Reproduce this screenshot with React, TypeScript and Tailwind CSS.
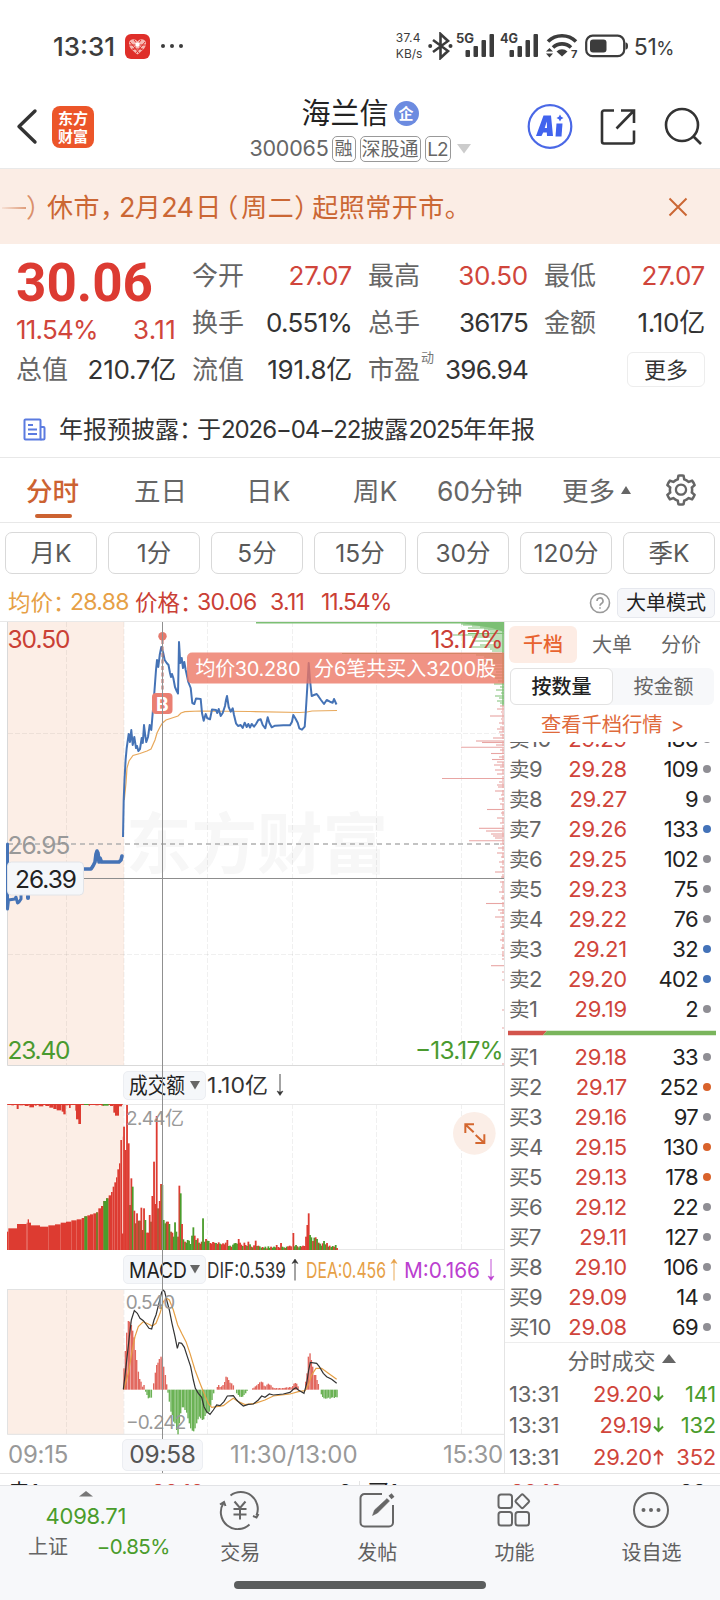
import type { ReactNode } from 'react';
import { AiOutlineSetting } from 'react-icons/ai';

type Tone = 'gray' | 'blue' | 'orange';
type BarColor = 'r' | 'g' | 'b';

interface Level {
  label: string;
  price: string;
  qty: string;
  tone: Tone;
}

const DOT: Record<Tone, string> = {
  gray: 'bg-[#8f8e94]',
  blue: 'bg-[#4372b8]',
  orange: 'bg-[#d9622b]',
};

const ASKS: Level[] = [
  { label: '卖10', price: '29.29', qty: '180', tone: 'gray' },
  { label: '卖9', price: '29.28', qty: '109', tone: 'gray' },
  { label: '卖8', price: '29.27', qty: '9', tone: 'gray' },
  { label: '卖7', price: '29.26', qty: '133', tone: 'blue' },
  { label: '卖6', price: '29.25', qty: '102', tone: 'gray' },
  { label: '卖5', price: '29.23', qty: '75', tone: 'gray' },
  { label: '卖4', price: '29.22', qty: '76', tone: 'gray' },
  { label: '卖3', price: '29.21', qty: '32', tone: 'blue' },
  { label: '卖2', price: '29.20', qty: '402', tone: 'blue' },
  { label: '卖1', price: '29.19', qty: '2', tone: 'gray' },
];

const BIDS: Level[] = [
  { label: '买1', price: '29.18', qty: '33', tone: 'gray' },
  { label: '买2', price: '29.17', qty: '252', tone: 'orange' },
  { label: '买3', price: '29.16', qty: '97', tone: 'gray' },
  { label: '买4', price: '29.15', qty: '130', tone: 'orange' },
  { label: '买5', price: '29.13', qty: '178', tone: 'orange' },
  { label: '买6', price: '29.12', qty: '22', tone: 'gray' },
  { label: '买7', price: '29.11', qty: '127', tone: 'gray' },
  { label: '买8', price: '29.10', qty: '106', tone: 'gray' },
  { label: '买9', price: '29.09', qty: '14', tone: 'gray' },
  { label: '买10', price: '29.08', qty: '69', tone: 'gray' },
];

const TRADES = [
  { time: '13:31', price: '29.20', qty: '141', up: false },
  { time: '13:31', price: '29.19', qty: '132', up: false },
  { time: '13:31', price: '29.20', qty: '352', up: true },
];

const PERIODS = ['月K', '1分', '5分', '15分', '30分', '120分', '季K'];

const GRID_X = [66.5, 124, 207.5, 292.5, 376.5, 461.5];

const PRICE =
  '123,837 123.7,800 124.5,780 125.6,760 126.7,748 128.7,734 130,742 131.3,730 132.7,745 134.3,737 136,748 137,746 138.3,751 140,749 141.7,738 142.8,743 144,725 145.3,736 146.3,742 148,737 149.7,725 151.3,730 152.7,713 154.3,693 156,670 157,660 158.3,667 159.7,655 161.3,647 163,652 164.7,660 166.7,663 168.5,665 170,673 171,677 172,674 173.3,678 175,687 176.7,691 178,693.5 178.5,670 179,642 180.3,663 181.7,658 183,668 184.3,662 185.7,670 188.3,682 190.7,688 192.3,703 194.3,704 196,698.5 200.7,699 202,713 203.7,720.7 205.7,714 207.3,718.3 210,719.3 212,709.5 216,710 217.3,713 218.7,709 220.7,716 222.7,713 225,706 226,700 227,696 228.7,707 230.7,711.7 232.7,708.3 234,715 236,723.3 238,726 240.7,725 242.7,728 244.7,722.7 246.7,727 248.3,724 250,727.5 251.7,724 254,726.7 256,724 258.3,720 260.7,719.3 262.7,725 265.3,728.3 267.7,717.3 269.3,722.7 271.7,727.3 275,725.7 283.3,725.3 290,725.3 292,721.7 293.3,715 295.3,718.3 297.7,722.7 299.3,728.3 302,729.7 304.7,726.7 305.7,713 307.3,687 308.7,663 310,680 311.7,696 314,695 316.7,694 318.7,696.7 321,700 324,704 326.7,700 330,701.7 332.7,702.7 334,699 336.5,704.5';

const AVERAGE =
  '124.3,800 126,783 127,768 129,761 133,755.5 140,753.5 147,751 151,749 155,740 157,733 160,727 162.5,723 166,720 172,718 178,716 181,713 185,711.7 200,711 250,711.5 300,712.5 307,712 312,711 337,710.5';

// opening auction, drawn heavier than the session line
const AUCTION_A = '7.5,844 7.5,909 8.5,900 15,899 16,897 17.5,903 19,902 21,899 21,892';
const AUCTION_B = '82,869 91,869 93,866 95,862 96,854 97,851 98,853 99,862 100,858 101.5,862 119,862 121,860 122,856';

// price distribution, [y, left edge]
const CHIPS_GREEN: [number, number][] = [
  [624, 461], [625, 463], [626, 472], [627, 480], [628, 468], [629, 484], [630, 488], [632, 490], [633.5, 468], [635, 453],
  [637, 472], [639, 490], [641, 473], [643, 494], [645, 480], [647, 470], [649, 490], [651, 492], [653.5, 342], [655, 476],
  [657, 484], [659, 492], [661, 480], [663, 488], [666, 493], [669, 490], [672, 496], [675, 488], [678, 495], [681, 498],
  [684, 494], [687, 500], [690, 496], [693, 501], [696, 495], [698, 499], [701, 497], [703, 500],
];
const CHIPS_RED: [number, number][] = [
  [706, 500], [709, 497], [712, 501], [716, 490], [719, 501], [723, 499], [727, 500], [729, 497], [732, 499], [735, 500],
  [738, 493], [741, 476], [742.5, 482], [745, 496], [747.3, 461], [750, 500], [753.5, 491], [757, 499], [759.5, 492], [762, 497],
  [765, 494], [767, 500], [770, 495], [774, 497], [778.5, 442], [782, 499], [785, 497], [787, 498], [791, 495], [795, 501],
  [799, 499], [804, 500], [809.5, 487], [813, 501], [818, 497], [823, 500], [828.3, 479], [831, 486], [834, 491], [836, 493],
  [838, 495], [840.7, 469], [844, 500], [848, 498], [853, 497], [857, 501], [862, 499], [867, 500], [872, 495], [877, 501],
  [882, 500], [887, 501], [892, 499], [898, 501], [903.5, 486], [910, 498], [913, 500], [917, 495], [921, 501], [927, 500],
  [934, 501], [940, 500], [948, 501], [956, 502], [965.7, 491], [972, 502], [980, 502], [1010, 502], [1028, 502], [1064, 502],
];

const AUCTION_TOP: [number, number][] = [
  [21, 485], [25, 475], [51, 462], [80, 458], [83, 448], [87, 458], [93, 466], [120, 470], [145, 466], [165, 463], [182, 458], [198, 455], [214, 451],
  [230, 448], [245, 444], [253, 439], [262, 436], [270, 433], [280, 430], [288, 427], [295, 415], [303, 408], [310, 393], [318, 385], [326, 376], [333, 366],
  [338, 350], [343, 337], [348, 322], [352, 298], [357, 280], [361, 210], [366, 490],
];

// hanging bars of unmatched auction volume
const UNMATCHED: [number, number, number][] = [
  [22, 8, 104], [34, 8, 106], [50, 6, 117], [58, 12, 106], [74, 12, 108], [88, 14, 112], [104, 6, 107], [116, 14, 109], [136, 12, 108],
  [148, 12, 113], [160, 10, 117], [170, 14, 121], [185, 7, 125], [190, 7, 133], [197, 8, 106], [207, 5, 114], [226, 5, 122], [228, 10, 148],
  [235, 8, 162], [246, 4, 104], [266, 4, 107], [286, 10, 106], [304, 8, 107], [330, 10, 108], [340, 5, 128], [345, 12, 137], [357, 9, 109],
];

const VOLUME: [number, number, BarColor][] = [
  [372, 170, 'r'], [377, 240, 'r'], [381, 105, 'r'], [386, 220, 'r'], [390, 405, 'b'], [394, 325, 'r'], [398, 350, 'g'], [403, 422, 'r'],
  [407, 460, 'b'], [411, 430, 'r'], [416, 452, 'b'], [420, 452, 'b'], [424, 413, 'r'], [428, 480, 'b'], [432, 415, 'r'], [436, 450, 'g'],
  [441, 488, 'r'], [445, 488, 'r'], [449, 435, 'r'], [453, 455, 'b'], [457, 378, 'r'], [462, 275, 'r'], [466, 402, 'r'], [470, 138, 'r'],
  [474, 415, 'b'], [479, 393, 'r'], [483, 342, 'r'], [487, 345, 'g'], [491, 450, 'g'], [496, 460, 'g'], [500, 455, 'b'], [504, 455, 'r'],
  [508, 462, 'g'], [513, 485, 'b'], [517, 488, 'r'], [521, 500, 'g'], [525, 457, 'g'], [529, 485, 'g'], [534, 500, 'b'], [538, 347, 'r'],
  [542, 370, 'g'], [546, 462, 'r'], [550, 508, 'g'], [555, 515, 'r'], [559, 518, 'g'], [563, 510, 'g'], [567, 512, 'g'], [571, 522, 'g'],
  [576, 497, 'g'], [580, 472, 'g'], [584, 497, 'r'], [588, 510, 'g'], [593, 505, 'r'], [597, 518, 'g'], [601, 521, 'r'], [605, 515, 'b'],
  [609, 445, 'g'], [614, 515, 'g'], [618, 507, 'r'], [622, 512, 'g'], [626, 513, 'g'], [631, 519, 'r'], [635, 521, 'r'], [639, 516, 'r'],
  [643, 518, 'r'], [648, 519, 'g'], [652, 522, 'r'], [656, 517, 'r'], [660, 521, 'g'], [665, 523, 'r'], [669, 520, 'r'], [673, 523, 'r'],
  [677, 518, 'r'], [682, 510, 'r'], [686, 528, 'g'], [690, 527, 'g'], [694, 530, 'r'], [699, 524, 'g'], [703, 520, 'g'], [707, 519, 'g'],
  [711, 521, 'g'], [716, 507, 'r'], [720, 518, 'r'], [724, 524, 'r'], [728, 528, 'g'], [733, 518, 'r'], [737, 525, 'r'], [741, 528, 'g'],
  [745, 515, 'r'], [750, 523, 'g'], [754, 530, 'r'], [758, 532, 'g'], [762, 526, 'r'], [767, 512, 'r'], [771, 528, 'g'], [775, 527, 'r'],
  [779, 529, 'g'], [784, 533, 'g'], [788, 531, 'r'], [792, 534, 'g'], [796, 530, 'g'], [801, 535, 'r'], [805, 529, 'g'], [809, 534, 'g'],
  [813, 530, 'r'], [818, 533, 'g'], [822, 530, 'g'], [826, 532, 'g'], [830, 525, 'r'], [835, 531, 'r'], [839, 533, 'r'], [843, 519, 'r'],
  [847, 530, 'g'], [852, 532, 'g'], [856, 534, 'r'], [860, 530, 'g'], [864, 529, 'r'], [869, 527, 'r'], [873, 529, 'r'], [880, 489, 'r'],
  [884, 529, 'g'], [888, 525, 'g'], [892, 529, 'b'], [897, 532, 'g'], [901, 528, 'g'], [905, 530, 'r'], [909, 527, 'r'], [914, 528, 'r'],
  [918, 500, 'r'], [922, 465, 'r'], [926, 430, 'r'], [930, 495, 'g'], [934, 502, 'g'], [939, 513, 'r'], [943, 503, 'g'], [947, 502, 'r'],
  [951, 507, 'g'], [956, 518, 'b'], [960, 521, 'g'], [964, 527, 'g'], [968, 520, 'r'], [972, 513, 'g'], [977, 523, 'g'], [981, 519, 'r'],
  [985, 530, 'g'], [989, 527, 'r'], [994, 531, 'g'], [998, 528, 'g'], [1002, 530, 'r'], [1007, 525, 'g'], [1011, 534, 'r'],
];

const FILL: Record<BarColor, string> = { r: '#dd3b31', g: '#4a9c2b', b: '#a4562e' };

const MACD: [number, number][] = [
  [372, 325], [376, 273], [380, 218], [385, 183], [389, 185], [394, 195], [398, 212], [402, 232], [406, 270], [410, 300], [415, 335],
  [419, 357], [423, 365], [428, 380], [432, 375], [437, 395], [441, 405], [445, 415], [449, 413], [454, 413], [461, 370], [466, 338],
  [470, 315], [474, 308], [478, 297], [483, 290], [487, 295], [491, 320], [496, 345], [500, 373], [504, 398], [508, 425], [513, 455],
  [517, 465], [521, 485], [525, 490], [530, 510], [534, 523], [538, 490], [542, 460], [547, 442], [551, 442], [555, 450], [560, 458],
  [564, 475], [568, 490], [572, 505], [577, 512], [581, 514], [585, 505], [590, 490], [594, 478], [598, 470], [602, 475], [607, 480],
  [611, 478], [615, 468], [620, 460], [624, 457], [628, 455], [632, 437], [636, 420], [641, 400], [652, 381], [656, 375], [660, 381],
  [665, 379], [669, 375], [674, 366], [678, 350], [682, 352], [686, 360], [690, 368], [695, 370], [700, 376], [710, 400], [715, 405],
  [719, 410], [724, 411], [728, 410], [732, 405], [737, 400], [741, 393], [758, 385], [762, 383], [766, 379], [770, 376], [775, 372],
  [779, 367], [784, 365], [788, 367], [792, 377], [796, 379], [801, 374], [805, 371], [809, 374], [813, 376], [818, 382], [822, 384],
  [826, 385], [830, 384], [835, 385], [839, 384], [843, 385], [848, 384], [852, 384], [856, 383], [860, 382], [865, 383], [869, 381],
  [873, 382], [878, 378], [882, 371], [886, 369], [890, 371], [894, 379], [917, 365], [921, 340], [925, 290], [930, 280], [934, 300],
  [938, 320], [943, 345], [947, 345], [951, 360], [955, 372], [964, 403], [968, 411], [972, 415], [977, 416], [981, 415], [985, 413],
  [990, 416], [994, 413], [998, 412], [1003, 414], [1007, 411], [1011, 412],
];

const DIF =
  '370,388 378,320 388,230 394,180 403,152 412,160 420,175 430,182 440,195 447,205 455,207 462,180 468,165 478,125 485,97 489,90 494,95 500,120 508,150 516,190 525,230 532,265 537,248 545,250 553,262 562,290 572,320 580,360 586,385 595,400 605,412 612,440 620,455 630,463 640,450 650,435 660,437 672,425 682,408 700,407 710,420 720,430 730,438 745,433 760,432 775,420 785,408 795,412 808,402 820,405 850,402 870,397 880,388 888,383 895,390 912,400 920,370 926,330 931,307 950,310 958,320 970,340 980,350 995,358 1010,370';
const DEA =
  '371,388 385,340 395,280 405,230 415,200 430,185 445,192 457,198 468,190 480,160 490,125 500,115 508,120 520,150 533,195 545,220 558,245 570,280 585,330 600,370 612,400 625,430 635,442 650,440 670,437 685,425 700,415 715,425 735,434 765,430 795,420 820,408 870,402 895,395 915,392 925,375 935,345 948,325 965,325 985,340 1010,358';

function Num({ children, tight, className = '' }: { children: ReactNode; tight?: boolean; className?: string }) {
  return <span className={`${tight ? 'tracking-[-0.03em]' : 'tracking-[-0.01em]'} ${className}`}>{children}</span>;
}

function Signal({ label }: { label: string }) {
  return (
    <svg className="overflow-visible" width="40" height="28" viewBox="0 0 40 28">
      <text x="0" y="10.500" fontSize="12.500" fontWeight="700" textLength="18" lengthAdjust="spacingAndGlyphs" fill="#3c3c3c">{label}</text>
      <g fill="#3c3c3c">
        <rect x="9.500" y="18" width="4.500" height="7" rx="1" />
        <rect x="17.500" y="14" width="4.500" height="11" rx="1" />
        <rect x="25.500" y="8" width="4.500" height="17" rx="1" />
        <rect x="33.500" y="2" width="4.500" height="23" rx="1" />
      </g>
    </svg>
  );
}

function StatusBar() {
  return (
    <div className="flex h-[92px] items-center justify-between pl-[53px] pr-[46px] text-[#3c3c3c]">
      <div className="flex items-center">
        <span className="w-[72px] pt-[2px] text-[26px] font-medium leading-none">13:31</span>
        <svg width="25" height="25" viewBox="0 0 25 25">
          <rect width="25" height="25" rx="6" fill="#df2f2a" />
          <path d="M12.500 20.500C6 15.500 3.500 12.500 4 9c.5-4 6-5 8.500-1.500C15 4 20.500 5 21 9c.5 3.500-2 6.500-8.500 11.500z" fill="#f6b9b3" />
          <path d="M5 8l9 11M9 6l8 10M20 8l-9 11M16 6L8 16M4 11h17M7 15h11" stroke="#df2f2a" strokeWidth="1" />
          <rect x="10.500" y="8.500" width="4" height="4" fill="#fff" />
        </svg>
        <div className="ml-[11px] flex gap-[5px]">
          <i className="h-[4px] w-[4px] rounded-full bg-[#3c3c3c]" />
          <i className="h-[4px] w-[4px] rounded-full bg-[#3c3c3c]" />
          <i className="h-[4px] w-[4px] rounded-full bg-[#3c3c3c]" />
        </div>
      </div>
      <div className="flex items-center">
        <div className="flex w-[32px] flex-col text-[12px] leading-[16px]">
          <span className="whitespace-nowrap tracking-[0.02em]">37.4</span>
          <span className="whitespace-nowrap">KB/s</span>
        </div>
        <svg width="26" height="28" viewBox="0 0 26 28" fill="none" stroke="#3c3c3c" strokeWidth="2.600">
          <path d="M5 8l15 11-7.500 7V2l7.500 7L5 20" />
          <circle cx="2.200" cy="14" r="2" fill="#3c3c3c" stroke="none" />
          <circle cx="22.500" cy="14" r="2" fill="#3c3c3c" stroke="none" />
        </svg>
        <div className="ml-[2px] flex gap-[4px]">
          <Signal label="5G" />
          <Signal label="4G" />
        </div>
        <svg className="ml-[5px] overflow-visible" width="34" height="26" viewBox="0 0 34 26" fill="none">
          <path d="M3 8.500a20 20 0 0 1 28 0" stroke="#3c3c3c" strokeWidth="3.600" />
          <path d="M8 14.500a13 13 0 0 1 18 0" stroke="#3c3c3c" strokeWidth="3.600" />
          <path d="M11.500 18.500a8 8 0 0 1 11 0L17 23.500z" fill="#3c3c3c" />
          <path d="M1 18.500l3.500-3.500 3.500 3.500zM1 20.500h7l-3.500 4z" fill="#3c3c3c" />
          <text x="26" y="25" fontSize="11" fontWeight="700" fill="#3c3c3c">7</text>
        </svg>
        <svg className="ml-[6px]" width="44" height="24" viewBox="0 0 44 24">
          <rect x="1.200" y="1.700" width="38" height="20.500" rx="6.500" fill="none" stroke="#3c3c3c" strokeWidth="2.200" />
          <rect x="5" y="5.500" width="16.500" height="13" rx="3" fill="#3c3c3c" />
          <path d="M40.500 8.500c2 0 2.500 1.500 2.500 3.500s-.5 3.500-2.500 3.500z" fill="#3c3c3c" />
        </svg>
        <span className="ml-[5px] pt-[2px] text-[23px] leading-none tracking-[-0.02em]">
          51<span className="text-[18.500px]">%</span>
        </span>
      </div>
    </div>
  );
}

function Header() {
  return (
    <header className="flex h-[77px] items-start border-b border-[#e9e9e9]">
      <div className="flex w-[240px] items-center pl-[16px] pt-[14px]">
        <svg width="22" height="40" viewBox="0 0 22 40" fill="none" stroke="#333" strokeWidth="3.400" strokeLinecap="round" strokeLinejoin="round">
          <path d="M19 4L3 19.500l16 15.500" />
        </svg>
        <div className="ml-[14px] flex h-[42px] w-[42px] flex-col items-center justify-center rounded-[8px] bg-[#ec5529] font-['Noto_Sans_CJK_SC'] text-[15px] font-bold leading-[18px] text-white">
          <span>东方</span>
          <span>财富</span>
        </div>
      </div>
      <div className="flex w-[240px] flex-col items-center pt-[3px]">
        <div className="flex items-center">
          <span className="pt-[2px] text-[29px] leading-[34px] text-[#222]">海兰信</span>
          <span className="ml-[5px] flex h-[25px] w-[25px] items-center justify-center rounded-full bg-[#6c8be0] text-[15px] font-bold leading-none text-white">企</span>
        </div>
        <div className="mt-[5px] flex items-center gap-[4px] text-[20px] leading-none text-[#666]">
          <Num className="-mr-px text-[21.500px]">300065</Num>
          <span className="flex h-[26px] w-[24px] items-center justify-center rounded-[5px] border border-[#999] text-[18px]">融</span>
          <span className="flex h-[26px] w-[61px] items-center justify-center rounded-[5px] border border-[#999] text-[19px]">深股通</span>
          <span className="flex h-[26px] w-[26px] items-center justify-center rounded-[5px] border border-[#999] text-[19px] tracking-[-0.04em]">L2</span>
          <svg className="ml-[2px]" width="14" height="10" viewBox="0 0 14 10">
            <path d="M0 0h14L7 9.500z" fill="#ccc" />
          </svg>
        </div>
      </div>
      <div className="flex flex-1 items-center pl-[47px] pt-[12px]">
        <svg width="46" height="46" viewBox="0 0 46 46">
          <circle cx="23" cy="22.500" r="21.300" fill="none" stroke="#4a68e6" strokeWidth="2.200" />
          <path d="M16.500 11.500h7.500l2 20.500h-6l-.2-3.500h-3.600L14.500 32H9z M19.800 17.500l-2.100 6.500h2.300z" fill="#4163ee" fillRule="evenodd" />
          <path d="M29.500 19.500h6L34.500 32.500h-6z" fill="#4163ee" />
          <path d="M33 10.500l1.200 2.300 2.300 1.200-2.300 1.200-1.200 2.300-1.200-2.300-2.300-1.200 2.300-1.200z" fill="#4163ee" />
        </svg>
        <svg className="ml-[27px]" width="36" height="38" viewBox="0 0 36 38" fill="none" stroke="#333" strokeWidth="2.600">
          <path d="M14 2.500H4a2 2 0 0 0-2 2V33.500a2 2 0 0 0 2 2H32a2 2 0 0 0 2-2V22.500" />
          <path d="M21 2.500H34V15M33.500 3L16.500 20.500" />
        </svg>
        <svg className="ml-[27px]" width="40" height="40" viewBox="0 0 40 40" fill="none" stroke="#333" strokeWidth="2.600">
          <circle cx="19" cy="18" r="16" />
          <path d="M30 29l8 8" />
        </svg>
      </div>
    </header>
  );
}

function Notice() {
  return (
    <div className="flex h-[75px] items-center justify-between bg-[#fbede5] pr-[32px] pt-px text-[26px] leading-none tracking-[0.02em] text-[#cb6734]">
      <div className="flex items-center whitespace-nowrap pt-px">
        <span className="ml-[2px] h-[2px] w-[24px] bg-gradient-to-r from-[#cb6734]/10 to-[#cb6734]/60" />
        <span className="w-[20px] text-[#cb6734]/70 [font-feature-settings:'halt']">）</span>
        <span className="pl-px">休市</span>
        <span className="w-[19px] [font-feature-settings:'halt']">，</span>
        <Num tight className="text-[27px]">2</Num>
        <span>月</span>
        <Num tight className="text-[27px]">24</Num>
        <span className="ml-[2px] w-[27px]">日</span>
        <span className="w-[19px] pl-[3px] [font-feature-settings:'halt']">（</span>
        <span>周二</span>
        <span className="w-[18px] [font-feature-settings:'halt']">）</span>
        <span>起照常开市。</span>
      </div>
      <svg width="20" height="20" viewBox="0 0 20 20" stroke="#cb6734" strokeWidth="2">
        <path d="M1.500 1.500l17 17M18.500 1.500l-17 17" />
      </svg>
    </div>
  );
}

function Pair({ label, value, red, sup, tight }: { label: string; value: string; red?: boolean; sup?: string; tight?: boolean }) {
  return (
    <div className="relative flex items-center justify-between whitespace-nowrap">
      <span className="text-[26px] leading-none text-[#666]">{label}</span>
      {sup && <span className="absolute left-[53px] top-[5px] text-[13px] leading-none text-[#777]">{sup}</span>}
      <Num tight={tight} className={`text-[26px] leading-none ${red ? 'text-[#d0453b]' : 'text-[#333]'}`}>{value}</Num>
    </div>
  );
}

function Quote() {
  return (
    <section className="flex h-[149px] gap-[16px] pl-[16px] pr-[15px] pt-[8px]">
      <div className="flex w-[160px] flex-col">
        <span className="flex h-[62px] items-center pt-px font-[Roboto] text-[53px] font-bold leading-none text-[#dc3b32]">30.06</span>
        <div className="flex h-[34px] items-center justify-between text-[26px] leading-none text-[#d0453b]">
          <Num tight>11.54%</Num>
          <span className="tracking-[0.01em]">3.11</span>
        </div>
        <div className="grid h-[46px]">
          <Pair label="总值" value="210.7亿" />
        </div>
      </div>
      <div className="grid h-[141px] w-[160px] grid-rows-3">
        <Pair label="今开" value="27.07" red />
        <Pair label="换手" value="0.551%" tight />
        <Pair label="流值" value="191.8亿" />
      </div>
      <div className="grid h-[141px] w-[160px] grid-rows-3">
        <Pair label="最高" value="30.50" red />
        <Pair label="总手" value="36175" tight />
        <Pair label="市盈" value="396.94" sup="动" tight />
      </div>
      <div className="grid h-[141px] w-[161px] grid-rows-3">
        <Pair label="最低" value="27.07" red />
        <Pair label="金额" value="1.10亿" />
        <button className="h-[35px] w-[78px] self-center justify-self-end rounded-[6px] border border-[#ededed] text-[22px] leading-none text-[#333]">更多</button>
      </div>
    </section>
  );
}

function News() {
  return (
    <div className="flex h-[65px] items-center border-b border-[#e8e8e8] pl-[23px] pt-[8px]">
      <svg width="23" height="23" viewBox="0 0 23 23" fill="none" stroke="#5b7be0" strokeWidth="2">
        <path d="M17.500 21.500H2.500a1 1 0 0 1-1-1v-18a1 1 0 0 1 1-1H16.500a1 1 0 0 1 1 1z" />
        <path d="M17.500 9h3a1 1 0 0 1 1 1v10.500a1 1 0 0 1-1 1h-3M5 7h5M5 11.500h9M5 16h9" />
      </svg>
      <div className="ml-[13px] flex items-center whitespace-nowrap pt-px text-[24px] leading-none text-[#333]">
        <span>年报预披露</span>
        <span className="w-[18px] [font-feature-settings:'halt']">：</span>
        <span>于</span>
        <span className="tracking-[-0.045em]">2026−04−22</span>
        <span>披露</span>
        <span className="tracking-[-0.045em]">2025</span>
        <span>年年报</span>
      </div>
    </div>
  );
}

function Tabs() {
  return (
    <nav className="flex h-[65px] items-center border-b border-[#e8e8e8] pt-[2px] text-[26.500px] leading-none text-[#666]">
      <div className="relative ml-[26px] w-[108px] font-medium text-[#cc6231]">
        分时
        <i className="absolute left-[9px] top-[36px] h-[4px] w-[37px] rounded-full bg-[#cc6231]" />
      </div>
      <div className="w-[112px]">五日</div>
      <div className="w-[107px]">日K</div>
      <div className="w-[84px]">周K</div>
      <div className="w-[125px]"><Num>60</Num>分钟</div>
      <div className="flex w-[101px] items-center gap-[6px]">
        更多
        <svg className="mb-[2px]" width="10" height="8" viewBox="0 0 10 8"><path d="M5 0l5 8H0z" fill="#666" /></svg>
      </div>
      <AiOutlineSetting className="mb-[2px]" size={36} />
    </nav>
  );
}

function Periods() {
  return (
    <div className="flex h-[61px] items-center gap-[11px] px-[5px] pb-px">
      {PERIODS.map((p) => (
        <button key={p} className="h-[42px] flex-1 rounded-[7px] border border-[#d9d9d9] pt-px text-[24.500px] leading-none text-[#595959]">
          {p}
        </button>
      ))}
    </div>
  );
}

function InfoBar() {
  return (
    <div className="flex h-[38px] items-center border-b border-[#e8e8e8] pl-[8px] pr-[5px] text-[23px] leading-none text-[#ca4035]">
      <span className="w-[62px] pt-px text-[22.500px] text-[#e6a046]">
        均价<span className="[font-feature-settings:'halt']">：</span>
      </span>
      <Num tight className="w-[65px] text-[#e6a046]">28.88</Num>
      <span className="w-[62px] pt-px text-[22.500px]">
        价格<span className="[font-feature-settings:'halt']">：</span>
      </span>
      <Num tight className="w-[73px]">30.06</Num>
      <Num tight className="w-[51px]">3.11</Num>
      <span className="flex-1 tracking-[-0.045em]">11.54%</span>
      <svg width="22" height="22" viewBox="0 0 22 22" fill="none" stroke="#999" strokeWidth="1.600">
        <circle cx="11" cy="11" r="9.500" />
        <path d="M8 9a3 3 0 1 1 4.500 2.500c-1.200.7-1.500 1.200-1.500 2.200M11 15.300v1.500" />
      </svg>
      <button className="ml-[6px] h-[30px] w-[98px] rounded-[5px] border border-[#e6e8ee] bg-[#f6f7fa] text-[20px] leading-none text-[#222]">大单模式</button>
    </div>
  );
}

function PriceChart() {
  return (
    <svg className="block" width="504" height="444" viewBox="0 622 504 444">
      <rect x="7.500" y="622" width="116.500" height="443" fill="#fceee6" />
      <text x="126" y="868" fontSize="66" fontWeight="700" textLength="262" lengthAdjust="spacingAndGlyphs" fill="#f7f7f7">东方财富</text>
      <g stroke="#000" strokeOpacity="0.06" strokeWidth="1" strokeDasharray="5 2">
        {GRID_X.map((x) => <line key={x} x1={x} x2={x} y1="622" y2="1065" />)}
        <line x1="8" x2="504" y1="733.500" y2="733.500" />
        <line x1="8" x2="504" y1="954.500" y2="954.500" />
      </g>
      <path d="M7.500 622V1065.500H504" fill="none" stroke="#d9d9d9" />
      <line x1="8" x2="504" y1="844" y2="844" stroke="#b0b0b0" strokeWidth="1.500" strokeDasharray="5 4" />
      <g stroke="#7cbf74" strokeWidth="1">
        <line x1="256" x2="504" y1="622.700" y2="622.700" strokeWidth="1.400" />
        <path d="M461 623H504V632l-12-4-18-3z" fill="#7cbf74" stroke="none" />
        {CHIPS_GREEN.map(([y, x]) => <line key={y} x1={x} x2="504" y1={y} y2={y} />)}
      </g>
      <path d="M503 622V706" stroke="#7cbf74" strokeWidth="1.500" />
      <g stroke="#e8a5a3" strokeWidth="1.100">
        {CHIPS_RED.map(([y, x]) => <line key={y} x1={x} x2="504" y1={y} y2={y} />)}
      </g>
      <path d="M503 706V960" stroke="#e9a9a6" strokeWidth="1.200" strokeDasharray="5 2" />
      <polyline points={AVERAGE} fill="none" stroke="#e8a95c" strokeWidth="1.200" />
      <polyline points={PRICE} fill="none" stroke="#4573b6" strokeWidth="2" strokeLinejoin="round" />
      <g fill="none" stroke="#4573b6" strokeLinejoin="round" strokeLinecap="round">
        <polyline points={AUCTION_A} strokeWidth="3" />
        <path d="M28 898v-2" strokeWidth="4" />
        <polyline points={AUCTION_B} strokeWidth="3.600" />
      </g>
      <g fontSize="24.500">
        <text x="7.500" y="648" fill="#ca4035" textLength="63">30.50</text>
        <text x="7.500" y="853.500" fill="#999" textLength="63">26.95</text>
        <text x="7.500" y="1058.500" fill="#4a9a2f" textLength="63">23.40</text>
        <text x="430.500" y="648" fill="#ca4035" textLength="73">13.17%</text>
        <text x="415" y="1058.500" fill="#4a9a2f" textLength="88.500">−13.17%</text>
      </g>
      <line x1="84" x2="504" y1="878.500" y2="878.500" stroke="#8d8d8d" />
      <rect x="7.500" y="862" width="76" height="33" rx="4" fill="#f5f7fa" stroke="#e2e4e8" />
      <text x="15" y="888" fontSize="24.500" fill="#222" textLength="62">26.39</text>
      <path d="M192 652.500H504V683.500H192a5 5 0 0 1-5-5v-21a5 5 0 0 1 5-5z" fill="#ec7462" fillOpacity="0.78" />
      <g fontSize="20" fill="#fff">
        <text x="195.500" y="676" textLength="105">均价30.280</text>
        <text x="314" y="676" textLength="182">分6笔共买入3200股</text>
      </g>
      <line x1="162.500" x2="162.500" y1="640" y2="692" stroke="#c0605c" strokeWidth="2" strokeDasharray="4 2.500" />
      <circle cx="162.500" cy="636.300" r="4.200" fill="#e57a6d" />
      <rect x="152" y="693" width="20.500" height="21" rx="4" fill="#ea7f72" />
      <text x="162.300" y="710.500" fontSize="19" fontWeight="700" textAnchor="middle" fill="#fff">B</text>
    </svg>
  );
}

function Arrow({ up, color }: { up?: boolean; color: string }) {
  return (
    <svg width="8" height="24" viewBox="0 0 8 24" fill="none" stroke={color}>
      <path d={up ? 'M4 22.500V2' : 'M4 1v20.500'} strokeWidth="0.900" />
      <path d={up ? 'M1 5.500L4 1l3 4.500-3-1.200z' : 'M1 18l3 4.500L7 18l-3 1.200z'} fill={color} strokeWidth="0.500" />
    </svg>
  );
}

function IndicatorPicker({ children }: { children: ReactNode }) {
  return (
    <div className="flex h-[29px] w-[83px] items-center justify-between rounded-[5px] border border-[#eceef2] bg-[#f5f7fa] pl-[5px] pr-[5px] text-[#222]">
      {children}
      <svg width="10" height="9" viewBox="0 0 10 9"><path d="M0 0h10L5 8.500z" fill="#666" /></svg>
    </div>
  );
}

function VolumeChart() {
  return (
    <svg className="block" width="504" height="146" viewBox="0 102 1512 438">
      <rect x="22" y="102" width="349" height="438" fill="#fceee6" />
      <g stroke="#000" strokeOpacity="0.06" strokeWidth="3" strokeDasharray="15 6">
        {GRID_X.map((x) => <line key={x} x1={x * 3} x2={x * 3} y1="102" y2="540" />)}
      </g>
      <path d="M22 103.500H1512M22.500 102V540M22 538.500H1512" stroke="#e8e8e8" strokeWidth="3" fill="none" />
      <g fill="#dd3b31">
        {AUCTION_TOP.map(([x, top], i) => {
          const next = i + 1 < AUCTION_TOP.length ? AUCTION_TOP[i + 1][0] : 371;
          return <rect key={x} x={x} y={top} width={next - x} height={540 - top} />;
        })}
        {UNMATCHED.map(([x, w, bottom]) => <rect key={x} x={x} y="102" width={w} height={bottom - 102} />)}
        <rect x="22" y="102" width="346" height="3" />
      </g>
      <g fill="#4a9c2b">
        <rect x="253" y="439" width="9" height="101" />
        <rect x="289" y="427" width="4" height="113" />
        <rect x="310" y="393" width="8" height="147" />
        <rect x="318" y="385" width="7" height="155" />
        <rect x="308" y="102" width="18" height="5" />
        <rect x="252" y="102" width="14" height="3" />
      </g>
      <rect x="367" y="200" width="3" height="290" fill="#f6b8b1" />
      {VOLUME.map(([x, top, c]) => (
        <rect key={x} x={x - 2.6} y={top} width="5.400" height={540 - top} fill={FILL[c]} />
      ))}
      <text x="378" y="166" fontSize="57" fill="#999" textLength="174">2.44亿</text>
      <circle cx="1423" cy="190" r="64" fill="#fbeee7" />
      <g fill="none" stroke="#d4672f" strokeWidth="6">
        <path d="M1396 189V163h26M1397 164l24 23" />
        <path d="M1453 193v26h-27M1452 218l-25-23" />
      </g>
    </svg>
  );
}

function MacdChart() {
  return (
    <svg className="block" width="504" height="146" viewBox="0 87 1512 438">
      <rect x="22" y="87" width="349" height="436" fill="#fceee6" />
      <g stroke="#000" strokeOpacity="0.06" strokeWidth="3" strokeDasharray="15 6">
        {GRID_X.map((x) => <line key={x} x1={x * 3} x2={x * 3} y1="87" y2="523" />)}
      </g>
      <path d="M22 88.500H1512M22.500 87V523M22 523H1512" stroke="#e2e2e2" strokeWidth="3" fill="none" />
      {MACD.map(([x, v]) => (
        <rect key={x} x={x - 2} y={Math.min(v, 389)} width="4.200" height={Math.abs(v - 389)} fill={v < 389 ? '#e2685f' : '#6bb255'} />
      ))}
      <polyline points={DEA} fill="none" stroke="#e6a046" strokeWidth="3.600" />
      <polyline points={DIF} fill="none" stroke="#333" strokeWidth="3.600" />
      <g fontSize="57" fill="#999">
        <text x="377" y="147" textLength="149">0.540</text>
        <text x="378" y="506" textLength="181">−0.242</text>
      </g>
    </svg>
  );
}

function Squeezed({ text, width, color }: { text: string; width: number; color: string }) {
  return (
    <svg className="overflow-visible" width={width} height="24" viewBox={`0 0 ${width} 24`}>
      <text x="0" y="20" fontSize="22" fill={color} textLength={width} lengthAdjust="spacingAndGlyphs">{text}</text>
    </svg>
  );
}

function Charts() {
  return (
    <div className="relative w-[504px]">
      <PriceChart />
      <div className="flex h-[38px] items-center pl-[123px]">
        <IndicatorPicker><Squeezed text="成交额" width={56} color="#222" /></IndicatorPicker>
        <div className="ml-[1px] flex w-[69px] items-center"><Squeezed text="1.10亿" width={61} color="#333" /></div>
        <Arrow color="#333" />
      </div>
      <VolumeChart />
      <div className="flex h-[39px] items-center pl-[123px]">
        <IndicatorPicker><Squeezed text="MACD" width={58} color="#222" /></IndicatorPicker>
        <div className="ml-[1px] flex items-center">
          <Squeezed text="DIF:0.539" width={79} color="#333" />
          <span className="ml-[5px]"><Arrow up color="#333" /></span>
        </div>
        <div className="ml-[7px] flex items-center">
          <Squeezed text="DEA:0.456" width={80} color="#e6a046" />
          <span className="ml-[4px]"><Arrow up color="#e6a046" /></span>
        </div>
        <div className="ml-[6px] flex items-center">
          <Squeezed text="M:0.166" width={76} color="#bb3fd0" />
          <span className="ml-[7px]"><Arrow color="#bb3fd0" /></span>
        </div>
      </div>
      <MacdChart />
      <i className="absolute left-[162px] top-0 h-[851px] w-px bg-[#909090]" />
      <div className="relative flex h-[38px] items-center pt-px text-[24px] leading-none text-[#999]">
        <span className="w-[115px] pl-[8px] tracking-[-0.01em]">09:15</span>
        <span className="ml-[7px] flex h-[32px] w-[81px] items-center justify-center rounded-[5px] border border-[#eceef2] bg-[#f6f7fa] text-[24.500px] tracking-[-0.01em] text-[#555]">09:58</span>
        <span className="ml-[27px] flex-1 tracking-[0.003em]">11:30/13:00</span>
        <span className="pr-px tracking-[-0.01em]">15:30</span>
      </div>
    </div>
  );
}

function LevelRow({ label, price, qty, tone }: Level) {
  return (
    <div className="flex h-[30px] shrink-0 items-center pl-[4px] pr-[9px] text-[22px] leading-none">
      <span className="w-[46px] whitespace-nowrap tracking-[-0.02em] text-[#666]">
        <span className="text-[20.500px]">{label.slice(0, 1)}</span>
        {label.slice(1)}
      </span>
      <Num className="w-[72px] text-right text-[#d0453b]">{price}</Num>
      <Num tight className="flex-1 text-right text-[#222]">{qty}</Num>
      <i className={`ml-[5px] h-[8px] w-[8px] rounded-full ${DOT[tone]}`} />
    </div>
  );
}

function OrderBook() {
  return (
    <aside className="flex w-[216px] flex-col border-l border-[#e4e4e4] bg-white">
      <div className="mt-[4px] flex h-[37px] items-center pl-[4px] text-[20px] leading-none text-[#666]">
        <span className="flex h-[37px] w-[68px] items-center justify-center rounded-[6px] bg-[#fdece4] font-medium text-[#e8632f]">千档</span>
        <span className="ml-[15px]">大单</span>
        <span className="ml-[29px]">分价</span>
      </div>
      <div className="ml-[5px] mr-[6px] mt-[5px] flex h-[37px] rounded-[6px] bg-[#f7f8fa] text-[20px] leading-none">
        <span className="flex w-[103px] items-center justify-center rounded-[6px] border border-[#e2e2e2] bg-white font-medium text-[#222]">按数量</span>
        <span className="flex flex-1 items-center justify-center text-[#666]">按金额</span>
      </div>
      <div className="flex h-[37px] items-center justify-center gap-[8px] pt-[3px] text-[20.300px] leading-none text-[#df6a3b]">
        查看千档行情 <span>&gt;</span>
      </div>
      <div className="flex h-[282px] flex-col justify-end overflow-hidden">
        {ASKS.map((l) => <LevelRow key={l.label} {...l} />)}
      </div>
      <svg className="mt-[6px] block" width="215" height="6" viewBox="0 0 215 6">
        <path d="M3 .8H42L38 5.300H3z" fill="#d3544c" />
        <path d="M42 .8H211V5.300H38z" fill="#7ab55c" />
      </svg>
      <div className="mt-[6px] flex h-[300px] flex-col">
        {BIDS.map((l) => <LevelRow key={l.label} {...l} />)}
      </div>
      <div className="flex h-[36px] items-center justify-center gap-[6px] border-t border-[#ededed] pl-[18px] text-[22px] leading-none text-[#666]">
        分时成交
        <svg className="mb-[4px]" width="14" height="9" viewBox="0 0 14 9"><path d="M7 0l7 9H0z" fill="#666" /></svg>
      </div>
      {TRADES.map((t, i) => (
        <div key={i} className="flex h-[31.500px] items-center pl-[4px] pr-[4px] text-[22px] leading-none">
          <Num className="w-[62px] text-[#666]">{t.time}</Num>
          <Num className="w-[81px] text-right text-[#d0453b]">{t.price}</Num>
          <svg width="12" height="16" viewBox="0 0 12 16" fill="none" stroke={t.up ? '#d0453b' : '#4a9c2b'} strokeWidth="2">
            <path d={t.up ? 'M6.500 15.500V2M2 6.500L6.500 2 11 6.500' : 'M6.500 .5V14M2 9.500L6.500 14 11 9.500'} />
          </svg>
          <Num className={`flex-1 text-right ${t.up ? 'text-[#d0453b]' : 'text-[#4a9c2b]'}`}>{t.qty}</Num>
        </div>
      ))}
    </aside>
  );
}

function NextRow() {
  return (
    <div className="flex h-[12px] items-start overflow-hidden border-t border-[#e4e4e4] pt-[7px] text-[22px] leading-none">
      <div className="flex w-[360px] border-r border-[#e4e4e4] pl-[8px] pr-[7px]">
        <span className="w-[120px] text-[#222]">卖1</span>
        <Num className="w-[76px] text-right text-[#d0453b]">29.19</Num>
        <Num className="flex-1 text-right text-[#222]">9</Num>
      </div>
      <div className="flex flex-1 pl-[7px] pr-[14px]">
        <span className="w-[120px] text-[#222]">买1</span>
        <Num className="w-[76px] text-right text-[#d0453b]">29.18</Num>
        <Num className="flex-1 text-right text-[#222]">33</Num>
      </div>
    </div>
  );
}

function NavItem({ label, children }: { label: string; children: ReactNode }) {
  return (
    <div className="flex w-[137.300px] flex-col items-center pt-[4px] text-[20px] leading-none text-[#606060]">
      <svg width="42" height="40" viewBox="0 0 42 40" fill="none" stroke="#666" strokeWidth="2">
        {children}
      </svg>
      <span className="mt-[13px]">{label}</span>
    </div>
  );
}

function BottomNav() {
  return (
    <footer className="flex h-[115px] flex-col border-t border-[#e2e3e6] bg-[#f7f8fa]">
      <div className="flex h-[95px]">
        <div className="flex w-[172px] flex-col items-center pt-[5px] leading-none">
          <svg width="14" height="6" viewBox="0 0 14 6"><path d="M7 0l7 5.500H0z" fill="#777" /></svg>
          <Num className="mt-[8px] text-[22px] text-[#4a9c2b]">4098.71</Num>
          <div className="mt-[10px] flex w-full items-center justify-between pl-[28px] pr-[2px]">
            <span className="text-[20px] text-[#666]">上证</span>
            <Num tight className="text-[20.500px] text-[#4a9c2b]">−0.85%</Num>
          </div>
        </div>
        <NavItem label="交易">
          <path d="M11.500 5.500A17 17 0 0 1 37.500 25.500M39.500 24l-2 3.500-3.500-1.500M30.500 34.500A17 17 0 0 1 4.500 13M1 14.500l4-2.500 1.500 4" />
          <path d="M15.500 11.500l5.500 6.500 5.500-6.500M14.500 19h13M14.500 24.500h13M21 18v11.500" />
        </NavItem>
        <NavItem label="发帖">
          <path d="M26 4H8.500a4 4 0 0 0-4 4V32.500a4 4 0 0 0 4 4H33a4 4 0 0 0 4-4V15" />
          <path d="M16.500 25.500l2-5.500L31 8.500l2.500 2.500L21.500 23z" fill="#666" strokeWidth="0.500" />
          <path d="M34 7.500l3-2.500" strokeWidth="4.500" />
        </NavItem>
        <NavItem label="功能">
          <rect x="5.500" y="4.500" width="13.500" height="13.500" rx="2.500" />
          <rect x="5.500" y="22" width="13.500" height="13.500" rx="2.500" />
          <rect x="22.500" y="22" width="13.500" height="13.500" rx="2.500" />
          <rect x="24" y="6" width="10.500" height="10.500" rx="1.500" transform="rotate(45 29.300 11.300)" />
        </NavItem>
        <NavItem label="设自选">
          <circle cx="21" cy="20" r="17" />
          <g fill="#666" stroke="none">
            <circle cx="13.500" cy="20" r="2" />
            <circle cx="21" cy="20" r="2" />
            <circle cx="28.500" cy="20" r="2" />
          </g>
        </NavItem>
      </div>
      <i className="mx-auto h-[8px] w-[252px] rounded-full bg-[#5b5d5d]" />
    </footer>
  );
}

export default function App() {
  return (
    <div className="h-[1600px] w-[720px] overflow-hidden bg-white font-[Inter,'Noto_Sans_CJK_SC',sans-serif]">
      <StatusBar />
      <Header />
      <Notice />
      <Quote />
      <News />
      <Tabs />
      <Periods />
      <InfoBar />
      <main className="flex h-[851px]">
        <Charts />
        <OrderBook />
      </main>
      <NextRow />
      <BottomNav />
    </div>
  );
}
